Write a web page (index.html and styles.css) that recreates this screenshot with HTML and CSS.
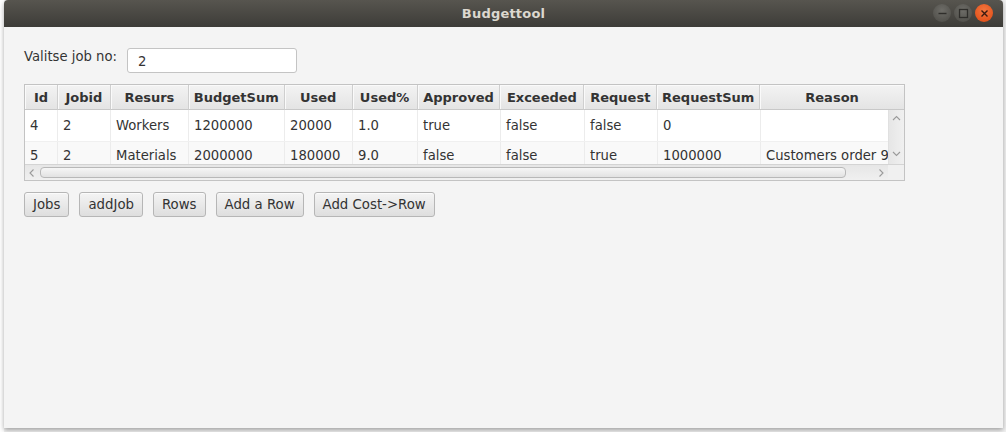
FILE: index.html
```html
<!DOCTYPE html>
<html>
<head>
<meta charset="utf-8">
<title>Budgettool</title>
<link rel="stylesheet" href="styles.css">
</head>
<body>
<div class="backdrop">
  <div class="window">
    <div class="titlebar">
      <span class="title">Budgettool</span>
      <div class="wbtns">
        <span class="wbtn"><svg width="17" height="17" viewBox="0 0 17 17"><line x1="4.5" y1="8.5" x2="12.5" y2="8.5" stroke="#2f2e2b" stroke-width="1.4"/></svg></span>
        <span class="wbtn"><svg width="17" height="17" viewBox="0 0 17 17"><rect x="4.5" y="4.5" width="8" height="8" fill="none" stroke="#2f2e2b" stroke-width="1.3"/></svg></span>
        <span class="wbtn close"><svg width="17" height="17" viewBox="0 0 17 17"><path d="M5.5 5.5 L11.5 11.5 M11.5 5.5 L5.5 11.5" stroke="#3a1a10" stroke-width="1.4"/></svg></span>
      </div>
    </div>
    <div class="content">
      <div class="jobrow">
        <span class="label">Valitse job no:</span>
        <div class="field">2</div>
      </div>
      <div class="table">
        <div class="thead">
          <div class="th c1">Id</div>
          <div class="th c2">Jobid</div>
          <div class="th c3">Resurs</div>
          <div class="th c4">BudgetSum</div>
          <div class="th c5">Used</div>
          <div class="th c6">Used%</div>
          <div class="th c7">Approved</div>
          <div class="th c8">Exceeded</div>
          <div class="th c9">Request</div>
          <div class="th c10">RequestSum</div>
          <div class="th c11">Reason</div>
        </div>
        <div class="tbody">
          <div class="rows">
            <div class="tr">
              <div class="td c1">4</div>
              <div class="td c2">2</div>
              <div class="td c3">Workers</div>
              <div class="td c4">1200000</div>
              <div class="td c5">20000</div>
              <div class="td c6">1.0</div>
              <div class="td c7">true</div>
              <div class="td c8">false</div>
              <div class="td c9">false</div>
              <div class="td c10">0</div>
              <div class="td c11b"></div>
            </div>
            <div class="tr odd">
              <div class="td c1">5</div>
              <div class="td c2">2</div>
              <div class="td c3">Materials</div>
              <div class="td c4">2000000</div>
              <div class="td c5">180000</div>
              <div class="td c6">9.0</div>
              <div class="td c7">false</div>
              <div class="td c8">false</div>
              <div class="td c9">true</div>
              <div class="td c10">1000000</div>
              <div class="td c11b">Customers order 98</div>
            </div>
          </div>
          <div class="vscroll">
            <svg width="15" height="12" viewBox="0 0 15 12"><polyline points="4,8 7.5,4.5 11,8" fill="none" stroke="#9a9a9a" stroke-width="1.1"/></svg>
            <svg width="15" height="12" viewBox="0 0 15 12"><polyline points="4,4 7.5,7.5 11,4" fill="none" stroke="#9a9a9a" stroke-width="1.1"/></svg>
          </div>
        </div>
        <div class="hbar">
          <div class="hscroll">
            <svg class="harrow" width="14" height="14" viewBox="0 0 14 14"><polyline points="8.5,3.5 5,7 8.5,10.5" fill="none" stroke="#9a9a9a" stroke-width="1.1"/></svg>
            <div class="track"><div class="thumb"></div></div>
            <svg class="harrow" width="14" height="14" viewBox="0 0 14 14"><polyline points="5.5,3.5 9,7 5.5,10.5" fill="none" stroke="#9a9a9a" stroke-width="1.1"/></svg>
          </div>
          <div class="corner"></div>
        </div>
      </div>
      <div class="buttons">
        <button class="btn">Jobs</button>
        <button class="btn">addJob</button>
        <button class="btn">Rows</button>
        <button class="btn">Add a Row</button>
        <button class="btn">Add Cost-&gt;Row</button>
      </div>
    </div>
  </div>
</div>
</body>
</html>
```

FILE: styles.css
```css
html, body {
  margin: 0;
  padding: 0;
}
body {
  width: 1006px;
  height: 432px;
  overflow: hidden;
  background: #f0f0f0;
  font-family: "DejaVu Sans", "Liberation Sans", sans-serif;
}
.backdrop {
  height: 432px;
  padding-left: 4px;
  box-sizing: border-box;
  background: linear-gradient(to right, #ffffff 0, #ffffff 4px, #f2f2f2 4px);
}
.window {
  width: 999px;
  height: 428px;
  background: #f4f4f4;
  box-shadow: 0 2px 5px rgba(0,0,0,0.35);
  display: flex;
  flex-direction: column;
  border-radius: 4px 4px 0 0;
}
.titlebar {
  height: 27px;
  flex: none;
  background: linear-gradient(to bottom, #57554f 0%, #3d3c38 100%);
  border-radius: 4px 4px 0 0;
  display: flex;
  align-items: center;
  justify-content: center;
  position: relative;
}
.title {
  color: #dcd8cf;
  font-weight: bold;
  font-size: 13px;
  letter-spacing: 0.2px;
}
.wbtns {
  position: absolute;
  right: 10px;
  top: 4px;
  display: flex;
  gap: 3px;
}
.wbtn {
  width: 18px;
  height: 18px;
  border-radius: 50%;
  background: radial-gradient(circle at 50% 35%, #6e6d68 0%, #55544f 70%, #4a4945 100%);
  display: flex;
  align-items: center;
  justify-content: center;
}
.wbtn.close {
  background: radial-gradient(circle at 50% 35%, #f2763f 0%, #e5561f 70%, #d24a17 100%);
}
.content {
  flex: 1;
  padding: 21px 20px 0 20px;
  display: flex;
  flex-direction: column;
  color: #333;
  font-size: 13px;
}
.jobrow {
  display: flex;
  align-items: flex-start;
  gap: 10px;
  height: 36px;
}
.label {
  padding-top: 1px;
  color: #333;
  font-size: 13.2px;
}
.field {
  width: 158px;
  height: 23px;
  background: #fff;
  border: 1px solid #c4c4c4;
  border-radius: 3px;
  padding-left: 10px;
  line-height: 25px;
  box-sizing: content-box;
  font-size: 13.2px;
}
.table {
  width: 879px;
  border: 1px solid #c3c3c3;
  background: #fff;
}
.thead {
  display: flex;
  height: 25px;
}
.th {
  box-sizing: border-box;
  height: 25px;
  background: linear-gradient(to bottom, #f3f3f3 0%, #e4e4e4 100%);
  border-right: 1px solid #cfcfcf;
  border-bottom: 1px solid #c8c8c8;
  box-shadow: inset 1px 1px 0 #fafafa;
  font-weight: bold;
  color: #333;
  display: flex;
  align-items: center;
  justify-content: center;
  font-size: 13px;
}
.th:last-child { border-right: none; }
.c1 { width: 33px; }
.c2 { width: 53px; }
.c3 { width: 78px; }
.c4 { width: 96px; }
.c5 { width: 68px; }
.c6 { width: 65px; }
.c7 { width: 83px; }
.c8 { width: 84px; }
.c9 { width: 73px; }
.c10 { width: 103px; }
.c11 { width: 144px; }
.c11b { width: 128px; }
.tbody {
  display: flex;
  height: 54px;
  overflow: hidden;
}
.rows {
  width: 863px;
  overflow: hidden;
}
.tr {
  display: flex;
  height: 32px;
  background: #fff;
  border-bottom: 1px solid #f0f0f0;
  box-sizing: border-box;
}
.tr.odd { background: #f9f9f9; }
.td {
  box-sizing: border-box;
  border-right: 1px solid #ececec;
  padding-left: 5px;
  display: flex;
  align-items: center;
  white-space: nowrap;
  overflow: hidden;
  color: #333;
  flex: none;
  font-size: 13.2px;
}
.tr .td { padding-bottom: 1px; }
.tr.odd .td { align-items: flex-start; padding-top: 6px; }
.td.c11b { border-right: none; }
.vscroll {
  width: 16px;
  flex: none;
  background: linear-gradient(to right, #e6e6e6, #f0f0f0);
  border-left: 1px solid #e0e0e0;
  box-sizing: border-box;
  display: flex;
  flex-direction: column;
  justify-content: space-between;
  padding: 2px 0 4px;
}
.hbar {
  display: flex;
  height: 15px;
  border-top: 1px solid #d4d4d4;
}
.hscroll {
  width: 863px;
  display: flex;
  align-items: center;
  background: linear-gradient(to bottom, #e6e6e6, #f0f0f0);
}
.harrow { flex: none; }
.track {
  flex: 1;
  height: 13px;
  display: flex;
  align-items: center;
}
.thumb {
  width: 806px;
  height: 11px;
  margin-left: 1px;
  border: 1px solid #b8b8b8;
  border-radius: 4px;
  background: linear-gradient(to bottom, #f6f6f6, #e2e2e2);
  box-sizing: border-box;
}
.corner {
  flex: 1;
  background: #f0f0f0;
}
.buttons {
  display: flex;
  gap: 10px;
  margin-top: 11px;
}
.btn {
  font-family: "DejaVu Sans", "Liberation Sans", sans-serif;
  font-size: 13.3px;
  color: #333;
  height: 25px;
  padding: 0 8px;
  border: 1px solid #b6b6b6;
  border-radius: 3px;
  background: linear-gradient(to bottom, #f4f4f4 0%, #dedede 100%);
  box-shadow: inset 0 1px 0 #fbfbfb;
}
```
